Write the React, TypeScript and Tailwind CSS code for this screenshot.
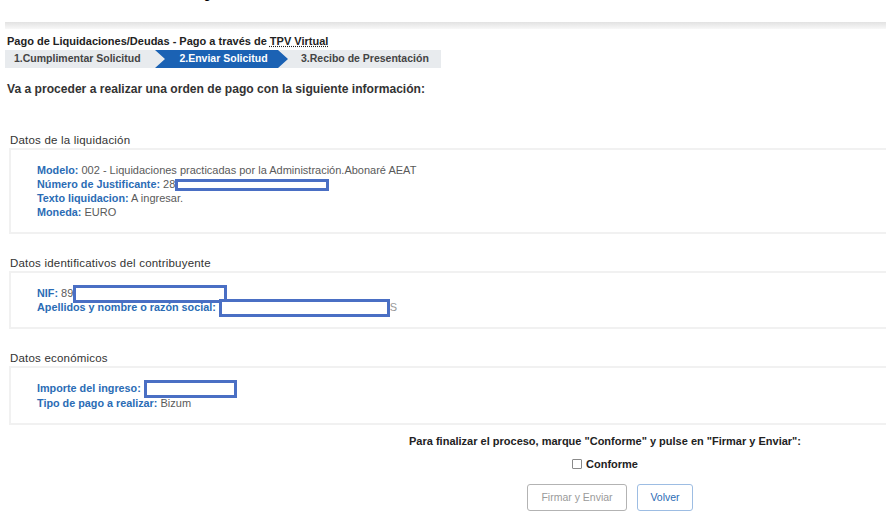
import React from "react";

function Redact({ w, h = 12 }: { w: number; h?: number }) {
  return (
    <span
      className="inline-block align-middle border-[3px] border-[#4a6fc4] bg-white -my-[4px]"
      style={{ width: w, height: h }}
    />
  );
}

function Row({ label, children }: { label: string; children: React.ReactNode }) {
  return (
    <div className="leading-[14px] h-[14px] whitespace-nowrap">
      <span className="font-bold text-[#2b6cb5] text-[10.8px]">{label}:</span>{" "}
      <span className="text-[#5a5a5a]">{children}</span>
    </div>
  );
}

function Section({
  title,
  children,
  className = "",
}: {
  title: string;
  children: React.ReactNode;
  className?: string;
}) {
  return (
    <div className={className}>
      <div className="pl-[3px] text-[11.5px] tracking-[0.2px] leading-[14px] text-[#333]">{title}</div>
      <div className="mt-[1px] ml-[2px] border-2 border-[#f1f1f1] bg-white pl-[26px] pt-[13px] pb-[13px] text-[11px]">
        {children}
      </div>
    </div>
  );
}

export default function App() {
  return (
    <div className="w-[886px] h-[523px] overflow-hidden bg-white font-['Liberation_Sans',Arial,sans-serif] relative">
      <span className="absolute left-[204px] -top-[22px] text-[22px] font-bold text-black leading-none">
        y
      </span>
      <div className="w-[1210px]">
        <div className="h-[22px]" />
        <div className="ml-[5px] h-[7px] bg-gradient-to-b from-[#e2e2e2] to-[#f8f8f8]" />
        <div className="px-[7px]">
          <div className="mt-[5px] text-[11px] leading-[14px] font-bold text-[#222]">
            Pago de Liquidaciones/Deudas - Pago a través de{" "}
            <span className="underline decoration-dotted">TPV Virtual</span>
          </div>
          <div className="mt-[2px] -ml-[2px] flex h-[18px] w-[436px] items-center bg-[#e8ebee] text-[10.5px] font-bold text-[#444]">
            <div className="pl-[9px] w-[150px]">1.Cumplimentar Solicitud</div>
            <div className="flex h-full w-[133px] items-center justify-center bg-[#1b62b4] pl-[4px] text-white [clip-path:polygon(0_0,calc(100%-10px)_0,100%_50%,calc(100%-10px)_100%,0_100%,10px_50%)]">
              2.Enviar Solicitud
            </div>
            <div className="pl-[13px]">3.Recibo de Presentación</div>
          </div>
          <div className="mt-[14px] text-[12.1px] leading-[14px] font-bold text-[#333]">
            Va a proceder a realizar una orden de pago con la siguiente información:
          </div>

          <Section title="Datos de la liquidación" className="mt-[37px]">
            <Row label="Modelo">002 - Liquidaciones practicadas por la Administración.Abonaré AEAT</Row>
            <Row label="Número de Justificante">
              28<Redact w={154} h={12} />
            </Row>
            <Row label="Texto liquidacion">A ingresar.</Row>
            <Row label="Moneda">EURO</Row>
          </Section>

          <Section title="Datos identificativos del contribuyente" className="mt-[22px]">
            <Row label="NIF">
              89<Redact w={154} h={18} />
            </Row>
            <Row label="Apellidos y nombre o razón social">
              <Redact w={171} h={18} />
              <span className="text-[#999]">S</span>
            </Row>
          </Section>

          <Section title="Datos económicos" className="mt-[22px]">
            <Row label="Importe del ingreso">
              <Redact w={93} h={18} />
            </Row>
            <div className="mt-[1px]">
              <Row label="Tipo de pago a realizar">Bizum</Row>
            </div>
          </Section>

          <div className="mt-[9px] flex flex-col items-center text-[11px] text-[#222]">
            <div className="font-bold leading-[14px]">
              Para finalizar el proceso, marque "Conforme" y pulse en "Firmar y Enviar":
            </div>
            <label className="mt-[9px] flex items-center gap-[4px] font-bold leading-[14px]">
              <span className="inline-block h-[10px] w-[10px] rounded-[1px] border border-[#8a8a8a] bg-white" />
              Conforme
            </label>
            <div className="mt-[13px] ml-[10px] flex gap-[10px]">
              <button className="h-[27px] w-[100px] rounded-[3px] border border-[#b3b3b3] bg-white text-[10.5px] text-[#9a9a9a]">
                Firmar y Enviar
              </button>
              <button className="h-[27px] w-[56px] rounded-[3px] border border-[#9dbde3] bg-white text-[10.5px] text-[#2b6cb5]">
                Volver
              </button>
            </div>
          </div>
        </div>
      </div>
    </div>
  );
}
